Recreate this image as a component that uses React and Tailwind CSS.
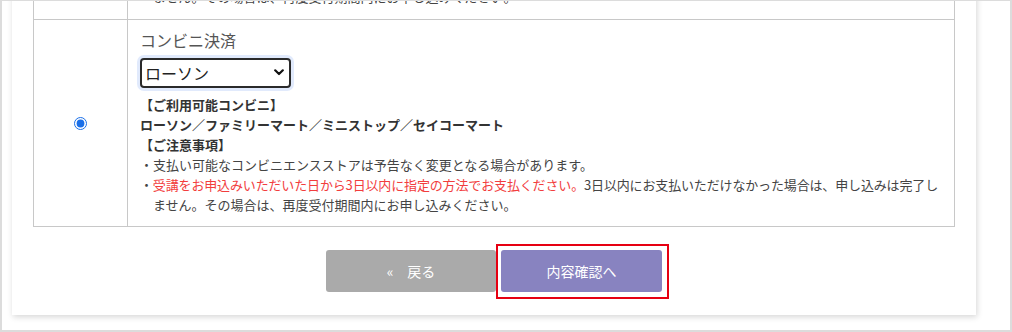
import React from 'react';

const FONT = '"Noto Sans CJK JP", "Noto Sans", sans-serif';

const Notice = ({ children, className = '' }) => (
    <p className={`pl-[13px] -indent-[13px] ${className}`}>{children}</p>
);

const App = () => {
    return (
        <div
            className="w-[1012px] h-[332px] overflow-hidden bg-white border-x-2 border-b-2 border-t border-[#dcdcdc] pl-[10px] pr-[34px]"
            style={{ fontFamily: FONT }}
        >
            <div className="bg-white shadow-[1px_2px_6px_rgba(0,0,0,0.16)] px-[21px] pb-[23px]">
                {/* table */}
                <div className="-mt-[27px] border border-[#c8c8c8] text-[13px] leading-[20px] text-[#444]">
                    <div className="flex border-b border-[#c8c8c8]">
                        <div className="w-[94px] shrink-0 border-r border-[#c8c8c8]" />
                        <div className="flex-1 px-[12px] pt-[12px] pb-[12px]">
                            <Notice>　ません。その場合は、再度受付期間内にお申し込みください。</Notice>
                        </div>
                    </div>
                    <div className="flex">
                        <div className="w-[94px] shrink-0 border-r border-[#c8c8c8] flex items-center justify-center">
                            <input type="radio" name="pay" checked readOnly className="w-[13px] h-[13px] m-0 accent-[#1a6fe8]" />
                        </div>
                        <div className="flex-1 px-[12px] pt-[10px] pb-[11px]">
                            <div className="text-[16px] leading-[20px] text-[#555]">コンビニ決済</div>
                            <div className="relative mt-[8px] w-[151px] h-[30px]">
                                <select
                                    defaultValue="lawson"
                                    className="appearance-none w-full h-full border-2 border-[#2a2a2a] rounded-[4px] bg-white pl-[3px] text-[16px] text-[#222] shadow-[0_0_0_3px_rgba(120,160,240,0.22)] outline-none"
                                    style={{ fontFamily: FONT }}
                                >
                                    <option value="lawson">ローソン</option>
                                    <option value="familymart">ファミリーマート</option>
                                    <option value="ministop">ミニストップ</option>
                                    <option value="seicomart">セイコーマート</option>
                                </select>
                                <svg
                                    className="absolute right-[7px] top-[11px] pointer-events-none"
                                    width="10"
                                    height="7"
                                    viewBox="0 0 10 7"
                                >
                                    <path d="M1.2 1.3 L5 5 L8.8 1.3" fill="none" stroke="#111" strokeWidth="2.2" strokeLinecap="round" strokeLinejoin="round" />
                                </svg>
                            </div>
                            <div className="mt-[7px]">
                                <p className="font-bold text-[#333]">【ご利用可能コンビニ】</p>
                                <p className="font-bold text-[#333]">ローソン／ファミリーマート／ミニストップ／セイコーマート</p>
                                <p className="font-bold text-[#333]">【ご注意事項】</p>
                                <Notice>・支払い可能なコンビニエンスストアは予告なく変更となる場合があります。</Notice>
                                <Notice>
                                    <span className="whitespace-nowrap tracking-[-0.15px]">
                                        ・<span className="text-[#f23d3d]">受講をお申込みいただいた日から3日以内に指定の方法でお支払ください。</span>3日以内にお支払いただけなかった場合は、申し込みは完了し
                                    </span>
                                    <br />ません。その場合は、再度受付期間内にお申し込みください。
                                </Notice>
                            </div>
                        </div>
                    </div>
                </div>

                {/* buttons */}
                <div className="mt-[23px] flex justify-center gap-[5px]">
                    <button className="w-[170px] h-[42px] rounded-[3px] bg-[#aaaaaa] text-white text-[14px] flex items-center justify-center">
                        <span className="mr-[14px]">«</span>戻る
                    </button>
                    <div className="relative">
                        <button className="w-[161px] h-[42px] rounded-[3px] bg-[#8883c0] text-white text-[14px]">
                            内容確認へ
                        </button>
                        <div className="absolute left-[-5px] right-[-7px] top-[-6px] bottom-[-7px] border-2 border-[#e60012] pointer-events-none" />
                    </div>
                </div>
            </div>
        </div>
    );
};

export default App;
